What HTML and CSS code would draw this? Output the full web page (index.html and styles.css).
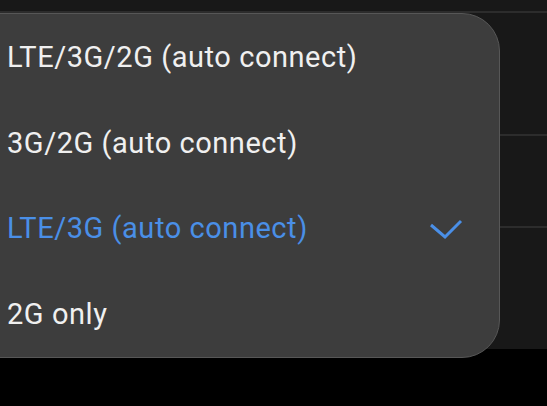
FILE: index.html
```html
<!DOCTYPE html>
<html lang="en">
<head>
  <meta charset="UTF-8">
  <title>Network mode</title>
  <link rel="stylesheet" href="styles.css">
</head>
<body>

  <!-- Settings list behind the menu -->
  <div class="screen">
    <div class="row row-top"></div>
    <div class="row row-a"></div>
    <div class="row row-b"></div>
    <div class="row row-c"></div>
  </div>
  <div class="navbar"></div>

  <!-- Popup menu -->
  <ul class="menu">
    <li class="option">LTE/3G/2G (auto connect)</li>
    <li class="option">3G/2G (auto connect)</li>
    <li class="option selected">
      LTE/3G (auto connect)
      <svg class="check" width="34" height="22" viewBox="0 0 34 22">
        <polyline points="2,7 16,19 32,3" fill="none" stroke="#4a8fe7" stroke-width="3"/>
      </svg>
    </li>
    <li class="option">2G only</li>
  </ul>

</body>
</html>
```

FILE: styles.css
```css
body {
  margin: 0;
  background: #000;
  font-family: Roboto, "Noto Sans", sans-serif;
  overflow: hidden;
}

.screen {
  height: 349px;
  background: #181818;
  display: flex;
  flex-direction: column;
}

.row {
  border-bottom: 2px solid #2c2c2c;
}

.row-top {
  height: 11px;
}

.row-a {
  height: 121px;
}

.row-b {
  height: 90px;
}

.row-c {
  flex: 1;
  border-bottom: none;
}

.navbar {
  height: 57px;
  background: #000;
}

.menu {
  position: absolute;
  top: 13px;
  left: -40px;
  width: 540px;
  height: 345px;
  margin: 0;
  padding: 0 0 0 46px;
  box-sizing: border-box;
  list-style: none;
  background: #3d3d3d;
  border: 1px solid #575757;
  border-radius: 38px;
  display: flex;
  flex-direction: column;
}

.option {
  flex: 1;
  display: flex;
  align-items: center;
  justify-content: space-between;
  padding-right: 36px;
  font-size: 29px;
  letter-spacing: 0.55px;
  color: #f0f0f0;
}

.selected {
  color: #4a8fe7;
}

.check {
  margin-top: 2px;
}
```
